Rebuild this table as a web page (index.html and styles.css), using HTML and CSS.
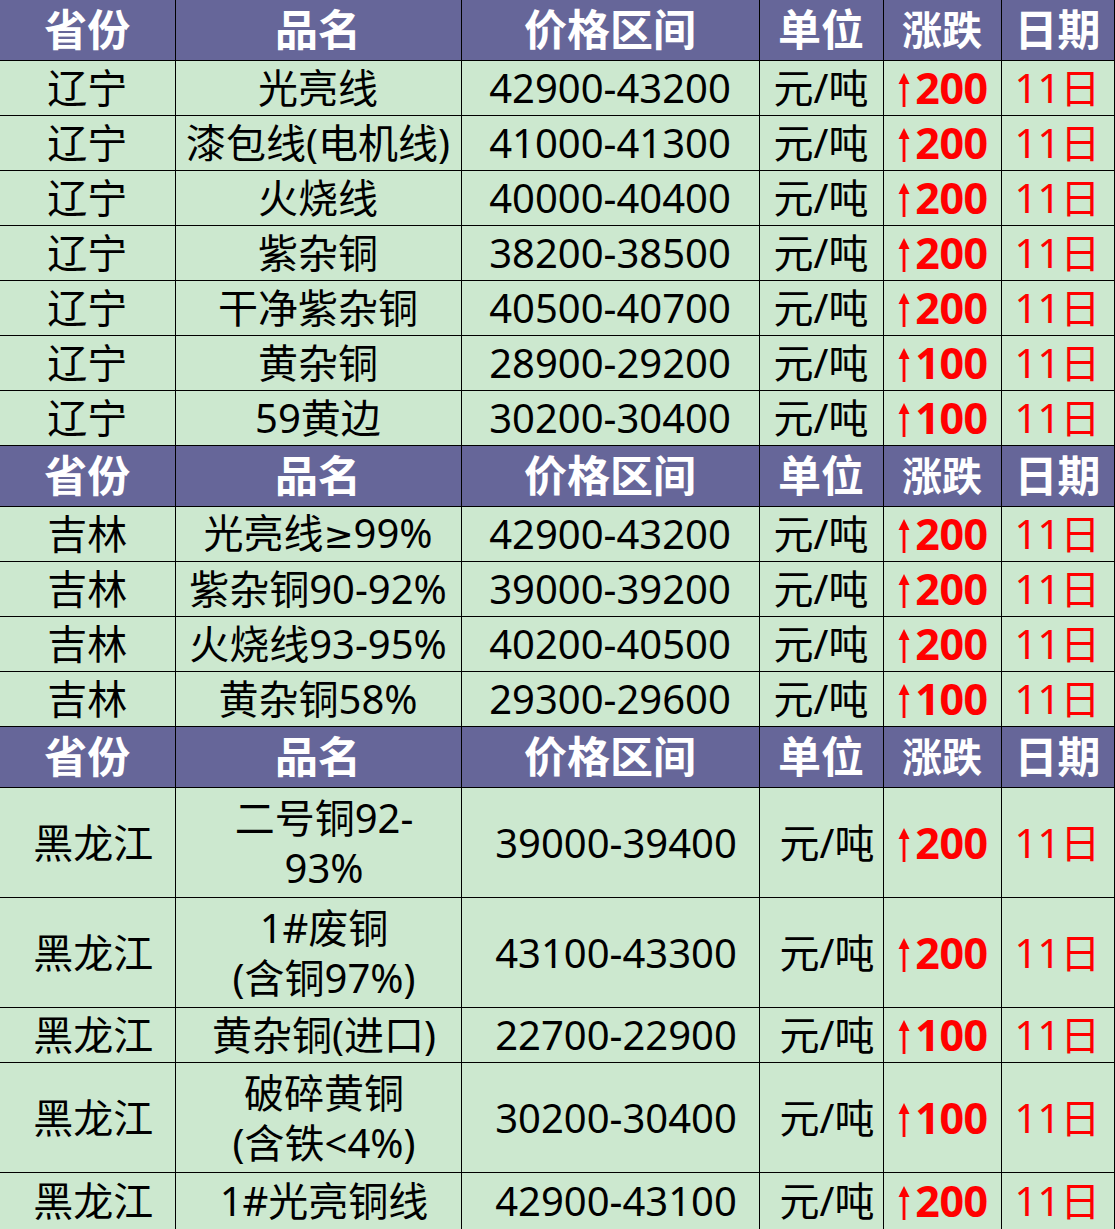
FILE: index.html
```html
<!DOCTYPE html>
<html lang="zh-CN">
<head>
<meta charset="utf-8">
<title>铜价表</title>
<link rel="stylesheet" href="styles.css">
</head>
<body>
<svg class="defs" width="0" height="0" aria-hidden="true">
  <defs>
    <g id="up">
      <rect x="6.6" y="8" width="2.8" height="26"/>
      <polygon points="8,0 13.5,11 2.5,11"/>
    </g>
  </defs>
</svg>
<table class="price-table">
  <colgroup>
    <col class="c-prov"><col class="c-name"><col class="c-price"><col class="c-unit"><col class="c-chg"><col class="c-date">
  </colgroup>
  <tbody>
    <tr class="head"><td>省份</td><td>品名</td><td>价格区间</td><td>单位</td><td class="hchg">涨跌</td><td>日期</td></tr>
    <tr><td>辽宁</td><td>光亮线</td><td>42900-43200</td><td>元/吨</td><td class="chg"><svg class="arr" viewBox="0 0 16 34"><use href="#up"/></svg>200</td><td class="date">11日</td></tr>
    <tr><td>辽宁</td><td>漆包线(电机线)</td><td>41000-41300</td><td>元/吨</td><td class="chg"><svg class="arr" viewBox="0 0 16 34"><use href="#up"/></svg>200</td><td class="date">11日</td></tr>
    <tr><td>辽宁</td><td>火烧线</td><td>40000-40400</td><td>元/吨</td><td class="chg"><svg class="arr" viewBox="0 0 16 34"><use href="#up"/></svg>200</td><td class="date">11日</td></tr>
    <tr><td>辽宁</td><td>紫杂铜</td><td>38200-38500</td><td>元/吨</td><td class="chg"><svg class="arr" viewBox="0 0 16 34"><use href="#up"/></svg>200</td><td class="date">11日</td></tr>
    <tr><td>辽宁</td><td>干净紫杂铜</td><td>40500-40700</td><td>元/吨</td><td class="chg"><svg class="arr" viewBox="0 0 16 34"><use href="#up"/></svg>200</td><td class="date">11日</td></tr>
    <tr><td>辽宁</td><td>黄杂铜</td><td>28900-29200</td><td>元/吨</td><td class="chg"><svg class="arr" viewBox="0 0 16 34"><use href="#up"/></svg>100</td><td class="date">11日</td></tr>
    <tr><td>辽宁</td><td>59黄边</td><td>30200-30400</td><td>元/吨</td><td class="chg"><svg class="arr" viewBox="0 0 16 34"><use href="#up"/></svg>100</td><td class="date">11日</td></tr>
    <tr class="head"><td>省份</td><td>品名</td><td>价格区间</td><td>单位</td><td class="hchg">涨跌</td><td>日期</td></tr>
    <tr><td>吉林</td><td>光亮线<span class="ge">≥</span>99%</td><td>42900-43200</td><td>元/吨</td><td class="chg"><svg class="arr" viewBox="0 0 16 34"><use href="#up"/></svg>200</td><td class="date">11日</td></tr>
    <tr><td>吉林</td><td>紫杂铜90-92%</td><td>39000-39200</td><td>元/吨</td><td class="chg"><svg class="arr" viewBox="0 0 16 34"><use href="#up"/></svg>200</td><td class="date">11日</td></tr>
    <tr><td>吉林</td><td>火烧线93-95%</td><td>40200-40500</td><td>元/吨</td><td class="chg"><svg class="arr" viewBox="0 0 16 34"><use href="#up"/></svg>200</td><td class="date">11日</td></tr>
    <tr><td>吉林</td><td>黄杂铜58%</td><td>29300-29600</td><td>元/吨</td><td class="chg"><svg class="arr" viewBox="0 0 16 34"><use href="#up"/></svg>100</td><td class="date">11日</td></tr>
    <tr class="head"><td>省份</td><td>品名</td><td>价格区间</td><td>单位</td><td class="hchg">涨跌</td><td>日期</td></tr>
    <tr class="tall hlj"><td class="sh">黑龙江</td><td class="sh">二号铜92-<br>93%</td><td class="sh">39000-39400</td><td class="sh">元/吨</td><td class="chg"><svg class="arr" viewBox="0 0 16 34"><use href="#up"/></svg>200</td><td class="date">11日</td></tr>
    <tr class="tall hlj"><td class="sh">黑龙江</td><td class="sh">1#废铜<br>(含铜97%)</td><td class="sh">43100-43300</td><td class="sh">元/吨</td><td class="chg"><svg class="arr" viewBox="0 0 16 34"><use href="#up"/></svg>200</td><td class="date">11日</td></tr>
    <tr class="hlj"><td class="sh">黑龙江</td><td class="sh">黄杂铜(进口)</td><td class="sh">22700-22900</td><td class="sh">元/吨</td><td class="chg"><svg class="arr" viewBox="0 0 16 34"><use href="#up"/></svg>100</td><td class="date">11日</td></tr>
    <tr class="tall hlj"><td class="sh">黑龙江</td><td class="sh">破碎黄铜<br>(含铁&lt;4%)</td><td class="sh">30200-30400</td><td class="sh">元/吨</td><td class="chg"><svg class="arr" viewBox="0 0 16 34"><use href="#up"/></svg>100</td><td class="date">11日</td></tr>
    <tr class="hlj last"><td class="sh">黑龙江</td><td class="sh">1#光亮铜线</td><td class="sh">42900-43100</td><td class="sh">元/吨</td><td class="chg"><svg class="arr" viewBox="0 0 16 34"><use href="#up"/></svg>200</td><td class="date">11日</td></tr>
  </tbody>
</table>
</body>
</html>
```

FILE: styles.css
```css
html, body {
  margin: 0;
  padding: 0;
  background: #cce8cf;
}

.defs {
  position: absolute;
  width: 0;
  height: 0;
  overflow: hidden;
}

.price-table {
  border-collapse: collapse;
  table-layout: fixed;
  width: 1114px;
  font-family: "Noto Sans", "Noto Sans CJK SC", sans-serif;
  font-size: 40px;
  color: #000;
}

.c-prov { width: 175px; }
.c-name { width: 286px; }
.c-price { width: 298px; }
.c-unit { width: 124px; }
.c-chg { width: 118px; }
.c-date { width: 113px; }

.price-table td {
  padding: 0;
  text-align: center;
  vertical-align: middle;
  white-space: nowrap;
  border-right: 1.5px solid #000;
  border-bottom: 1.5px solid #000;
  background: #cce8cf;
  line-height: 50px;
  height: 54px;
}

.price-table tr.head td {
  background: #666699;
  color: #fff;
  font-weight: 700;
  font-size: 43px;
  height: 60px;
}

.price-table tr.head td.hchg {
  font-size: 40px;
}

.price-table tr.tall td {
  height: 109px;
}

.price-table tr.last td {
  border-bottom: none;
  height: 56px;
}

.price-table td.chg {
  color: #ff0000;
  font-weight: 700;
  font-size: 43px;
  letter-spacing: -0.5px;
}

.arr {
  width: 16px;
  height: 34px;
  fill: #ff0000;
  vertical-align: -3px;
  margin-right: 3px;
}

.ge {
  font-family: "DejaVu Sans", sans-serif;
  font-size: 36px;
}

.price-table td.date {
  color: #ff0000;
}

.price-table td.sh {
  padding-left: 12px;
}
```
